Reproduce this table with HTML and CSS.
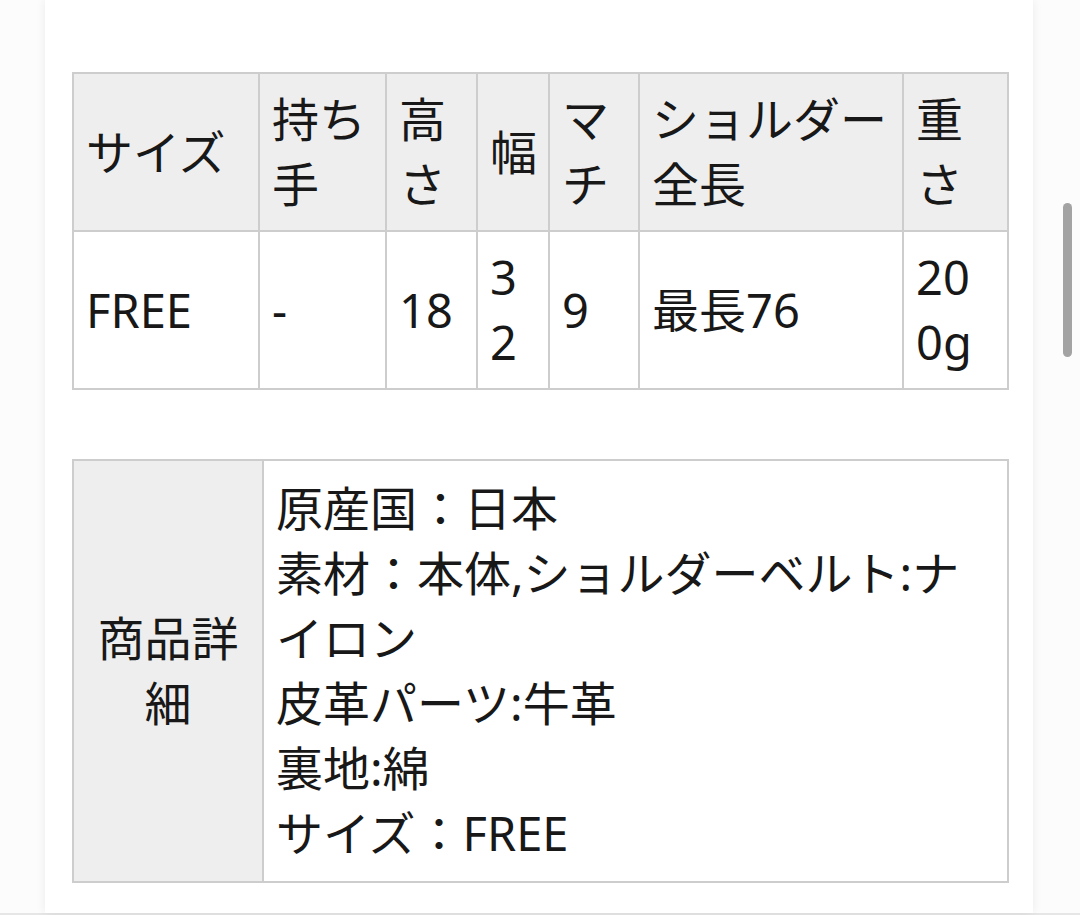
FILE: index.html
```html
<!DOCTYPE html>
<html lang="ja">
<head>
<meta charset="utf-8">
<link rel="stylesheet" href="styles.css">
</head>
<body>
<div class="page">
  <main class="sheet">
    <table class="spec">
      <colgroup>
        <col class="c1"><col class="c2"><col class="c3"><col class="c4"><col class="c5"><col class="c6"><col class="c7">
      </colgroup>
      <tr class="head">
        <th>サイズ</th>
        <th>持ち手</th>
        <th>高さ</th>
        <th>幅</th>
        <th>マチ</th>
        <th>ショルダー全長</th>
        <th>重さ</th>
      </tr>
      <tr>
        <td>FREE</td>
        <td>-</td>
        <td>18</td>
        <td>32</td>
        <td>9</td>
        <td>最長76</td>
        <td>200g</td>
      </tr>
    </table>

    <table class="detail">
      <colgroup><col class="d1"><col class="d2"></colgroup>
      <tr>
        <th>商品詳細</th>
        <td>原産国：日本<br>素材：本体,ショルダーベルト:ナイロン<br>皮革パーツ:牛革<br>裏地:綿<br>サイズ：FREE</td>
      </tr>
    </table>
  </main>
  <div class="scrollbar"></div>
</div>
</body>
</html>
```

FILE: styles.css
```css
html, body {
  margin: 0;
  padding: 0;
}
body {
  width: 1080px;
  height: 915px;
  overflow: hidden;
  background: #fcfcfc;
  font-family: "Noto Sans", "Noto Sans CJK JP", sans-serif;
  color: #181818;
}
.page {
  position: relative;
  height: 913px;
  border-bottom: 2px solid #e6e6e6;
  display: flex;
}
.sheet {
  margin-left: 45px;
  width: 988px;
  height: 913px;
  background: #ffffff;
  box-shadow: 0 0 10px rgba(0, 0, 0, 0.07);
  padding: 72px 0 0 27px;
  box-sizing: border-box;
}
table {
  border-collapse: collapse;
  table-layout: fixed;
  width: 935px;
  font-size: 47px;
  line-height: 65px;
}
th, td {
  border: 2px solid #cdcdcd;
  font-weight: normal;
  text-align: left;
  vertical-align: middle;
  word-break: break-all;
  padding: 13px 13px 13px 12px;
}
.spec .head th {
  background: #eeeeee;
}
.c1 { width: 186px; }
.c2 { width: 127px; }
.c3 { width: 91px; }
.c4 { width: 72px; }
.c5 { width: 90px; }
.c6 { width: 264px; }
.c7 { width: 105px; }

.detail {
  margin-top: 69px;
}
.d1 { width: 190px; }
.d2 { width: 745px; }
.detail th {
  background: #eeeeee;
  text-align: center;
  padding: 14px 10px;
}
.detail td {
  padding: 15px 24px 15px 12px;
}
.scrollbar {
  position: absolute;
  left: 1063px;
  top: 203px;
  width: 9px;
  height: 154px;
  border-radius: 5px;
  background: #a3a3a3;
}
```
